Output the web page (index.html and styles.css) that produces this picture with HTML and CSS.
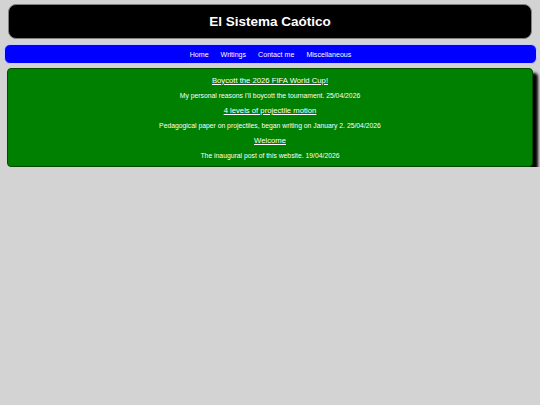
FILE: index.html
```html
<!DOCTYPE html>
<html lang="es">
<head>
<meta charset="utf-8">
<title>El Sistema Caótico</title>
<link rel="stylesheet" href="styles.css">
</head>
<body>
<header class="masthead">
  <h1 class="site-title">El Sistema Caótico</h1>
</header>
<nav class="menu">
  <a href="#">Home</a>
  <a href="#">Writings</a>
  <a href="#">Contact me</a>
  <a href="#">Miscellaneous</a>
</nav>
<main class="posts">
  <article class="post">
    <a class="post-title" href="#">Boycott the 2026 FIFA World Cup!</a>
    <p class="post-desc">My personal reasons I'll boycott the tournament. 25/04/2026</p>
  </article>
  <article class="post">
    <a class="post-title" href="#">4 levels of projectile motion</a>
    <p class="post-desc">Pedagogical paper on projectiles, began writing on January 2. 25/04/2026</p>
  </article>
  <article class="post">
    <a class="post-title" href="#">Welcome</a>
    <p class="post-desc">The inaugural post of this website. 19/04/2026</p>
  </article>
</main>
</body>
</html>
```

FILE: styles.css
```css
html, body {
  margin: 0;
  padding: 0;
  background: #d3d3d3;
  font-family: "Liberation Sans", Arial, sans-serif;
  color: #fff;
}
body {
  padding-top: 4px;
}
.masthead {
  margin: 0 8px 0 8px;
  height: 33px;
  background: #000;
  border: 1px solid #808080;
  border-radius: 8px;
  display: flex;
  align-items: center;
  justify-content: center;
}
.site-title {
  margin: 0;
  font-size: 13.5px;
  font-weight: bold;
  color: #fff;
}
.menu {
  margin: 5px 3px 0 4px;
  height: 17px;
  padding-top: 1px;
  background: #0000ff;
  border: 1px solid #c8c8ff;
  border-radius: 6px;
  display: flex;
  align-items: center;
  justify-content: center;
  gap: 12px;
}
.menu a {
  color: #fff;
  text-decoration: none;
  font-size: 7.1px;
}
.posts {
  margin: 4px 7px 0 7px;
  background: #008000;
  border: 1px solid #004d00;
  border-radius: 4px;
  box-shadow: 5px 5px 3px #000;
  padding: 7px 0 6px 0;
  display: flex;
  flex-direction: column;
  align-items: center;
  gap: 6px;
}
.post {
  display: flex;
  flex-direction: column;
  align-items: center;
  gap: 7px;
}
.post-title {
  color: #fff;
  text-decoration: underline;
  font-size: 7.7px;
  line-height: 9px;
}
.post-desc {
  margin: 0;
  font-size: 6.8px;
  line-height: 8px;
}
```
